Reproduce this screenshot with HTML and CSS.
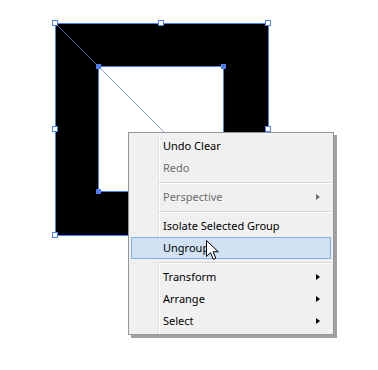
FILE: index.html
```html
<!DOCTYPE html>
<html>

<head>
    <title>Ungroup</title>
    <meta charset="utf-8">
    <link rel="stylesheet" href="styles.css">
</head>

<body>
    <div class="canvas">
        <svg class="artwork" width="378" height="370" viewBox="0 0 378 370">
            <rect x="55" y="23" width="213" height="212" fill="#000"/>
            <rect x="99" y="66" width="125" height="125" fill="#fff"/>
            <g fill="none" stroke="#4c7ff6" stroke-width="1">
                <rect x="55.5" y="23.5" width="213" height="212"/>
                <rect x="98.5" y="66.5" width="125" height="125"/>
            </g>
            <line x1="55.5" y1="23.5" x2="223.5" y2="191.5" stroke="#4c7ff6" stroke-width="0.7"/>
            <g fill="#4c7ff6">
                <rect x="96" y="64" width="5" height="5"/>
                <rect x="221" y="64" width="5" height="5"/>
                <rect x="96" y="189" width="5" height="5"/>
                <rect x="221" y="189" width="5" height="5"/>
            </g>
            <g fill="#fff" stroke="#4c7ff6" stroke-width="1">
                <rect x="52.5" y="20.5" width="5" height="5"/>
                <rect x="158.5" y="20.5" width="5" height="5"/>
                <rect x="265.5" y="20.5" width="5" height="5"/>
                <rect x="52.5" y="126.5" width="5" height="5"/>
                <rect x="265.5" y="126.5" width="5" height="5"/>
                <rect x="52.5" y="232.5" width="5" height="5"/>
            </g>
        </svg>

        <div class="menu">
            <div class="item">Undo Clear</div>
            <div class="item disabled">Redo</div>
            <div class="sep"></div>
            <div class="item disabled has-sub">Perspective</div>
            <div class="sep"></div>
            <div class="item">Isolate Selected Group</div>
            <div class="item active">Ungroup</div>
            <div class="sep"></div>
            <div class="item has-sub">Transform</div>
            <div class="item has-sub">Arrange</div>
            <div class="item has-sub">Select</div>
        </div>

        <svg class="cursor" width="14" height="22" viewBox="0 0 14 22">
            <path d="M0.5 0.5 L0.5 16.5 L4.5 12.7 L7.3 19.3 L9.8 18.2 L7.1 11.8 L12.3 11.8 Z" fill="#fff" stroke="#000" stroke-width="1" stroke-linejoin="miter"/>
        </svg>
    </div>
</body>

</html>
```

FILE: styles.css
```css
body {
    margin: 0;
    background-color: #FFFFFF;
    font-family: "Noto Sans", "Open Sans", sans-serif;
}

.canvas {
    position: relative;
    width: 378px;
    height: 370px;
    overflow: hidden;
}

.artwork {
    display: block;
}

.menu {
    position: absolute;
    left: 128px;
    top: 132px;
    width: 204px;
    padding: 2px 0;
    display: flex;
    flex-direction: column;
    background-color: #F0F0F0;
    border: 1px solid #979797;
    box-shadow: 3px 3px 0 #A0A0A0;
    background-image: linear-gradient(to right, transparent 29px, #E2E3E3 29px, #E2E3E3 30px, #FFFFFF 30px, #FFFFFF 31px, transparent 31px);
}

.item {
    position: relative;
    height: 20px;
    line-height: 20px;
    margin: 0 2px;
    padding-left: 31px;
    border: 1px solid transparent;
    font-size: 11px;
    color: #000000;
}

.item.disabled {
    color: #6D6D6D;
}

.item.active {
    background-color: #D1E3F3;
    border-color: #7DB2E8;
}

.item.has-sub::after {
    content: "";
    position: absolute;
    right: 10px;
    top: 7px;
    border-left: 4px solid #000000;
    border-top: 3.5px solid transparent;
    border-bottom: 3.5px solid transparent;
}

.item.disabled.has-sub::after {
    border-left-color: #6D6D6D;
}

.sep {
    height: 1px;
    margin: 3px 2px 2px 30px;
    background-color: #D7D7D7;
    border-bottom: 1px solid #FFFFFF;
}

.cursor {
    position: absolute;
    left: 206px;
    top: 240px;
}
```
